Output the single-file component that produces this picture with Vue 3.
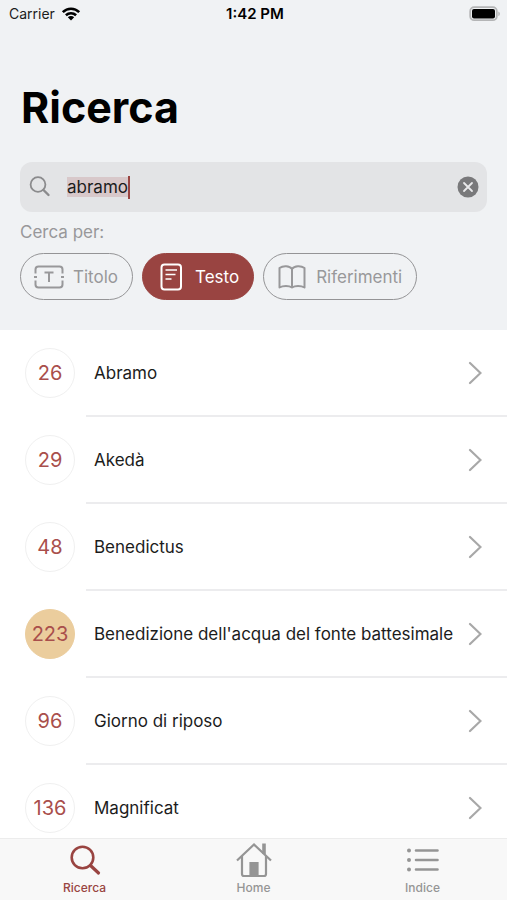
<script setup>
import { ref } from 'vue';

const query = ref('abramo');
const mode = ref('testo');
const tab = ref('ricerca');

const modes = [
  { id: 'titolo', label: 'Titolo' },
  { id: 'testo', label: 'Testo' },
  { id: 'riferimenti', label: 'Riferimenti' },
];

const songs = [
  { page: 26, title: 'Abramo' },
  { page: 29, title: 'Akedà' },
  { page: 48, title: 'Benedictus' },
  { page: 223, title: "Benedizione dell'acqua del fonte battesimale", liturgy: true },
  { page: 96, title: 'Giorno di riposo' },
  { page: 136, title: 'Magnificat' },
];

const tabs = [
  { id: 'ricerca', label: 'Ricerca' },
  { id: 'home', label: 'Home' },
  { id: 'indice', label: 'Indice' },
];

// Empty the search box
const clearQuery = () => {
  query.value = '';
};
</script>

<template>
  <div class="app">
    <header class="header">
      <!-- Status bar -->
      <div class="status-bar">
        <div class="carrier">
          <span>Carrier</span>
          <svg width="20" height="16" viewBox="0 0 20 16">
            <g fill="none" stroke="#000" stroke-width="2.6">
              <path d="M1.8 6.2C6.4 1.6 13.6 1.6 18.2 6.2" />
              <path d="M4.9 9.3C7.8 6.6 12.2 6.6 15.1 9.3" />
            </g>
            <path d="M6.8 11.2C8.6 9.6 11.4 9.6 13.2 11.2L10 14.6Z" />
          </svg>
        </div>
        <div class="time">1:42 PM</div>
        <div class="battery">
          <svg width="32" height="16" viewBox="0 0 32 16">
            <rect x="1.2" y="1.2" width="26.6" height="13" rx="4" fill="none" stroke="#b4b5b6" stroke-width="1.8" />
            <rect x="3" y="3" width="23" height="9.4" rx="2" />
            <path d="M29.3 5.4C31.4 6.2 31.4 9.2 29.3 10Z" fill="#b4b5b6" />
          </svg>
        </div>
      </div>

      <h1>Ricerca</h1>

      <!-- Search box -->
      <div class="search-box">
        <label for="query" aria-label="Ricerca">
          <svg width="22" height="22" viewBox="0 0 22 22" fill="none" stroke="#8b8b8d">
            <circle cx="9" cy="8.5" r="7.4" stroke-width="1.8" />
            <path d="M14.5 14L19.500 19" stroke-width="2.4" stroke-linecap="round" />
          </svg>
        </label>
        <div class="search-field">
          <input id="query" v-model="query" type="text" autocomplete="off" />
          <span class="cursor"></span>
        </div>
        <button type="button" class="clear-btn" aria-label="Cancella" @click="clearQuery">
          <svg width="22" height="22" viewBox="0 0 22 22">
            <circle cx="11" cy="11" r="10.5" fill="#79797b" />
            <path d="M7 7L15 15M15 7L7 15" stroke="#e9e9eb" stroke-width="1.8" stroke-linecap="round" />
          </svg>
        </button>
      </div>

      <!-- Search modes -->
      <p class="hint">Cerca per:</p>
      <div class="modes">
        <button
          v-for="item in modes"
          :key="item.id"
          type="button"
          class="mode-btn"
          :class="{ active: mode === item.id }"
          @click="mode = item.id"
        >
          <svg v-if="item.id === 'titolo'" width="30" height="28" viewBox="0 0 30 28" fill="none" stroke="currentColor" stroke-width="2">
            <path d="M1.5 10.5V6.5Q1.5 3.500 4.5 3.500H25.5Q28.5 3.500 28.5 6.5V10.5M1.5 17.5V21.5Q1.5 24.500 4.5 24.500H25.5Q28.5 24.500 28.5 21.5V17.5M0 14H3M27 14H30" />
            <path d="M10.5 9.500H19.5M15 9.500V19" />
          </svg>
          <svg v-else-if="item.id === 'testo'" width="30" height="28" viewBox="0 0 30 28" fill="none" stroke="currentColor" stroke-width="2">
            <rect x="5.500" y="1.5" width="19.500" height="25" rx="3" />
            <path d="M9.5 7H21M9.5 11.5H19.500M9.5 16H15.5" stroke-width="1.6" />
          </svg>
          <svg v-else width="30" height="28" viewBox="0 0 30 28" fill="none" stroke="currentColor" stroke-width="2" stroke-linejoin="round">
            <path d="M15 6C12.500 2.500 6 2.500 2.500 5V24.500C6 22.500 12 22.500 15 24.500C18 22.500 24 22.500 27.500 24.500V5C24 2.500 17.500 2.500 15 6V24.500" />
          </svg>
          <span>{{ item.label }}</span>
        </button>
      </div>
    </header>

    <!-- Results -->
    <main class="results">
      <ul>
        <li v-for="song in songs" :key="song.page">
          <a href="#" class="song">
            <span class="page" :class="{ liturgy: song.liturgy }">{{ song.page }}</span>
            <span class="song-body">
              <span class="title">{{ song.title }}</span>
              <svg width="14" height="24" viewBox="0 0 14 24" fill="none" stroke="#a8a8a8" stroke-width="2.2" stroke-linecap="round">
                <path d="M2 2L12.500 12L2 22" />
              </svg>
            </span>
          </a>
        </li>
      </ul>
    </main>

    <!-- Tab bar -->
    <nav class="tab-bar">
      <a
        v-for="item in tabs"
        :key="item.id"
        href="#"
        class="tab"
        :class="{ active: tab === item.id }"
        @click.prevent="tab = item.id"
      >
        <svg v-if="item.id === 'ricerca'" width="36" height="36" viewBox="0 0 36 36" fill="none" stroke="currentColor">
          <circle cx="15.5" cy="15.500" r="10.800" stroke-width="2.6" />
          <path d="M23.5 23.5L31.500 31" stroke-width="3.2" stroke-linecap="round" />
        </svg>
        <svg v-else-if="item.id === 'home'" width="36" height="36" viewBox="0 0 36 36" fill="none" stroke="currentColor" stroke-width="2.2">
          <path d="M1 18.500L18 2.500L35 18.500" />
          <path d="M6 14V32Q6 34 8 34H28Q30 34 30 32V14" />
          <path d="M28 12V1.5" stroke-width="3.6" />
          <path d="M14.500 34V21H21.500V34Z" fill="currentColor" />
        </svg>
        <svg v-else width="36" height="36" viewBox="0 0 36 36" fill="none" stroke="currentColor" stroke-width="2.6" stroke-linecap="round">
          <path d="M11 8.5H32.5M11 18H32.5M11 27.5H32.5" />
          <path d="M4 8.5H4.01M4 18H4.01M4 27.5H4.01" stroke-width="4" />
        </svg>
        <span>{{ item.label }}</span>
      </a>
    </nav>
  </div>
</template>

<style>
body {
  margin: 0;
}
</style>

<style scoped>
.app {
  display: flex;
  flex-direction: column;
  height: 100vh;
  background: #fff;
  color: #1c1c1c;
  font-family: Inter, 'Liberation Sans', sans-serif;
}

.app * {
  box-sizing: border-box;
}

svg {
  display: block;
  flex-shrink: 0;
}

button,
input {
  font: inherit;
  border: none;
  padding: 0;
}

button {
  cursor: pointer;
}

.header {
  flex-shrink: 0;
  padding-bottom: 30px;
  background: #f0f2f4;
}

/* Status Bar */
.status-bar {
  display: grid;
  grid-template-columns: 1fr auto 1fr;
  align-items: center;
  height: 27px;
  padding: 0 6px 0 9px;
  font-size: 14px;
}

.carrier {
  display: flex;
  align-items: center;
  gap: 6px;
}

.time {
  color: #000;
  font-size: 15px;
  font-weight: 600;
}

.battery {
  display: flex;
  justify-content: flex-end;
}

h1 {
  margin: 55px 21px 0;
  color: #000;
  font-size: 43px;
  font-weight: 700;
  line-height: 50px;
}

/* Search Box */
.search-box {
  display: flex;
  align-items: center;
  height: 50px;
  margin: 30px 20px 0;
  padding: 0 8px 0 9px;
  border-radius: 12px;
  background: #e3e4e6;
}

.search-field {
  display: flex;
  align-items: center;
  flex: 1;
  min-width: 0;
  margin-left: 16px;
}

.search-field input {
  field-sizing: content;
  height: 20px;
  outline: none;
  background: #d8c8ca;
  color: #1c1c1c;
  font-size: 17px;
}

.cursor {
  width: 2px;
  height: 23px;
  background: #994441;
}

.clear-btn {
  background: none;
}

/* Search Modes */
.hint {
  margin: 8px 20px 0;
  color: #98989a;
  font-size: 17px;
  line-height: 24px;
}

.modes {
  display: flex;
  gap: 9px;
  margin: 9px 20px 0;
}

.mode-btn {
  display: flex;
  align-items: center;
  gap: 9px;
  height: 47px;
  padding: 0 14px 0 13px;
  border: 1px solid #949496;
  border-radius: 24px;
  background: none;
  color: #98989a;
  font-size: 17px;
}

.mode-btn.active {
  border-color: #994441;
  background: #994441;
  color: #fff;
}

/* Results */
.results {
  flex: 1;
  min-height: 0;
  overflow: hidden auto;
  scrollbar-width: none;
}

ul {
  margin: 0;
  padding: 0;
  list-style: none;
}

.song {
  display: flex;
  height: 87px;
  padding-left: 25px;
  color: inherit;
  text-decoration: none;
}

.page {
  display: flex;
  justify-content: center;
  align-items: center;
  flex-shrink: 0;
  width: 50px;
  height: 50px;
  margin-top: 18px;
  border: 1px solid #f0f0f0;
  border-radius: 50%;
  color: #a94f4c;
  font-size: 20px;
}

.page.liturgy {
  border-color: #ebcd9d;
  background: #ebcd9d;
}

.song-body {
  display: flex;
  justify-content: space-between;
  align-items: center;
  flex: 1;
  margin-left: 11px;
  padding: 0 25px 0 8px;
  border-bottom: 2px solid #ececee;
}

.title {
  font-size: 17px;
}

/* Tab Bar */
.tab-bar {
  display: flex;
  flex-shrink: 0;
  height: 62px;
  border-top: 1px solid #ececec;
  background: #f8f8f8;
}

.tab {
  display: flex;
  flex-direction: column;
  align-items: center;
  flex: 1;
  padding-top: 3px;
  color: #959595;
  font-size: 12px;
  font-weight: 500;
  line-height: 20px;
  text-decoration: none;
}

.tab.active {
  color: #994441;
}
</style>
